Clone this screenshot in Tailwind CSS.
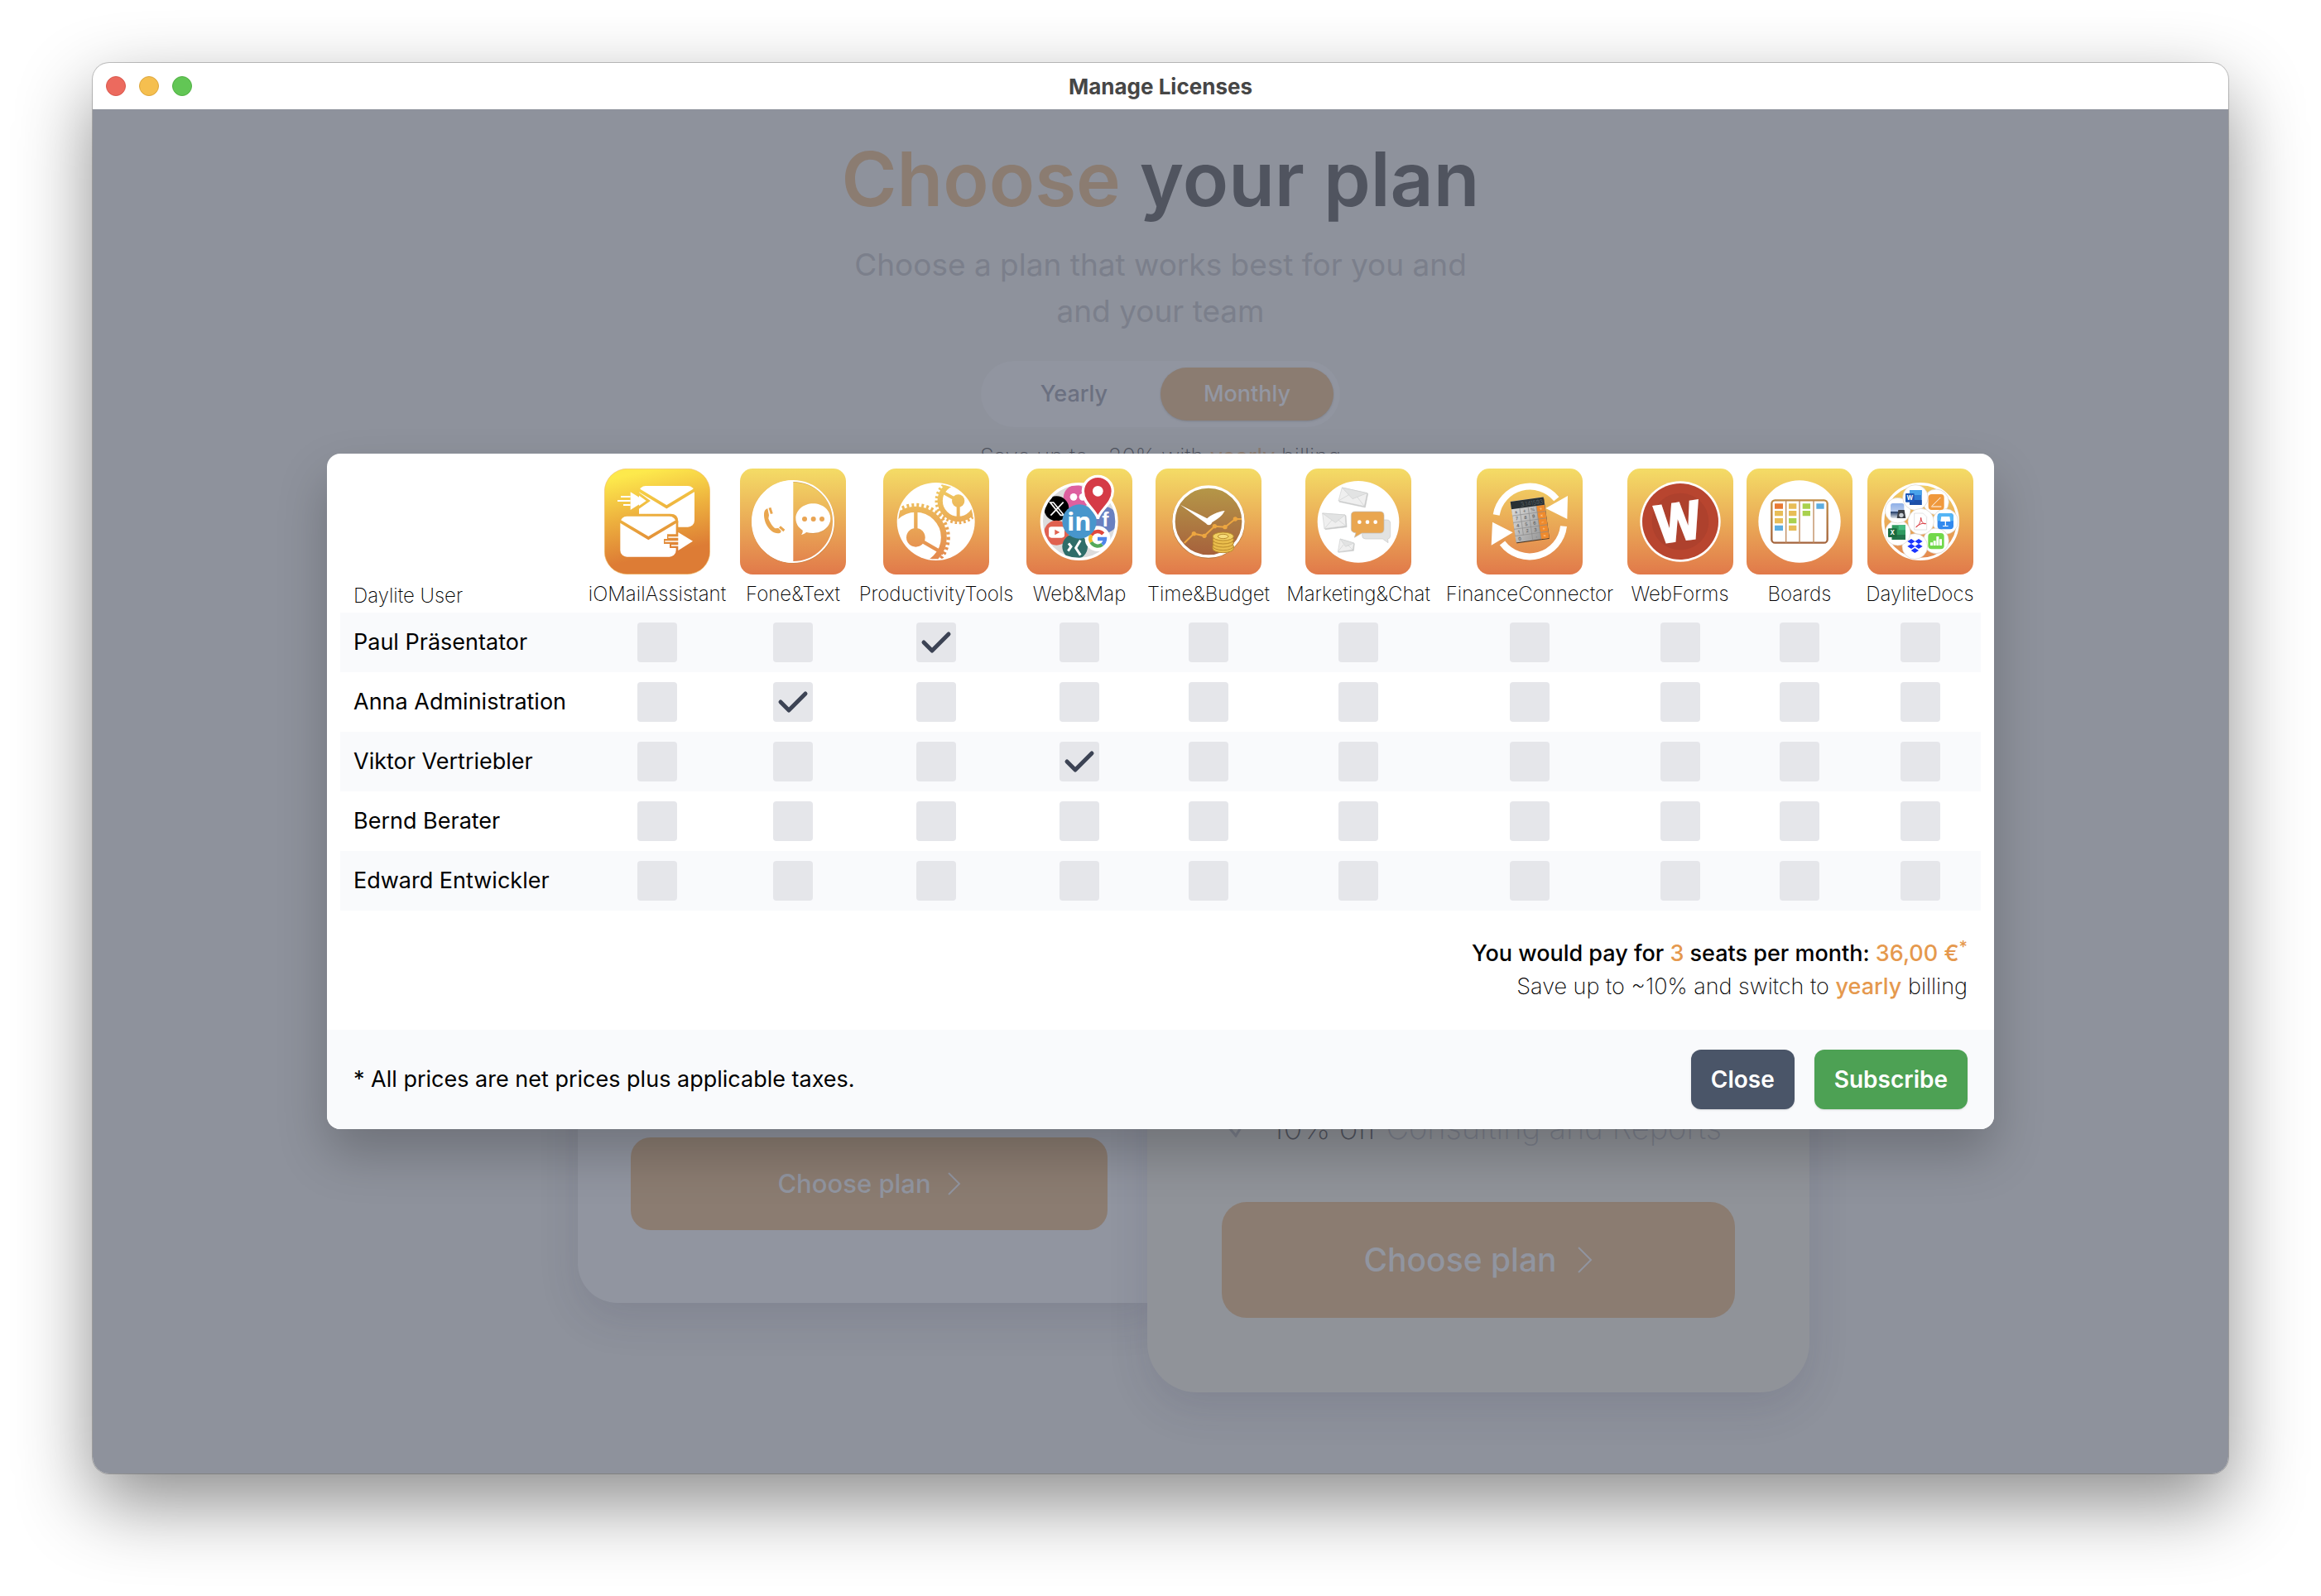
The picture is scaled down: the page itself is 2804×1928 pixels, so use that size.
<!DOCTYPE html>
<html lang="en">
  <head>
    <meta charset="UTF-8" />
    <meta name="viewport" content="width=device-width, initial-scale=1.0" />
    <title>Manage Licenses</title>
    <script src="https://cdn.jsdelivr.net/npm/@tailwindcss/browser@4"></script>
  </head>

  <body class="bg-white font-[Inter,sans-serif] text-[27px] text-black">
    <div class="min-h-screen flex flex-col px-28 pt-19 pb-37">
      <div class="flex-1 flex flex-col rounded-[20px] overflow-hidden bg-white shadow-[0_0_0_1px_rgba(0,0,0,0.22),0_36px_90px_rgba(0,0,0,0.45)]">
        <!-- Title bar -->
        <header class="grid grid-cols-3 items-center h-14 px-4">
          <div class="flex gap-4">
            <button type="button" aria-label="Close window" class="size-6 rounded-full bg-[#ec6a5e] border border-[#d8584d]"></button>
            <button type="button" aria-label="Minimize window" class="size-6 rounded-full bg-[#f5bf4f] border border-[#dba53c]"></button>
            <button type="button" aria-label="Zoom window" class="size-6 rounded-full bg-[#62c655] border border-[#50af43]"></button>
          </div>
          <h1 class="text-center text-[26px] font-bold text-[#464646]">Manage Licenses</h1>
        </header>

        <main class="relative flex-1 flex flex-col items-center bg-[#8e929c] overflow-hidden">
          <!-- Plan page, dimmed behind the dialog -->
          <h2 class="mt-8 text-[91px] leading-[104px] font-semibold text-[#50545f]"><span class="text-[#8b7c71]">Choose</span> your plan</h2>
          <p class="mt-6 text-[37px] leading-14 text-center text-[#7b7f8b]">Choose a plan that works best for you and<br />and your team</p>

          <div class="mt-8 flex rounded-full bg-[#9195a0] p-2 text-[27px] font-medium">
            <button type="button" class="h-16 w-[209px] rounded-full text-[#6b7080]">Yearly</button>
            <button type="button" class="h-16 w-[209px] rounded-full bg-[#8b7c71] text-[#9397a3] shadow-sm">Monthly</button>
          </div>
          <p class="mt-4 leading-10 font-extralight text-[#50545f]">Save up to ~20% with <a href="#" class="font-normal text-[#8b7c71]">yearly</a> billing</p>

          <div class="mt-19 pl-20 flex items-center">
            <section class="w-[704px] h-[818px] flex flex-col justify-end pl-16 pr-16 pb-22 rounded-l-[48px] bg-[#9195a0] shadow-[0_20px_50px_rgba(40,45,70,0.12)]">
              <button type="button" class="h-28 flex items-center justify-center gap-5 rounded-3xl bg-[#8b7c71] text-[31px] font-medium text-[#9195a0]">
                Choose plan
                <svg class="w-4 h-7" viewBox="0 0 16 28" fill="none" stroke="currentColor" stroke-width="2"><path d="M1 1l13 13L1 27" /></svg>
              </button>
            </section>
            <section class="relative -ml-4 w-[800px] h-[1034px] flex flex-col justify-end px-[90px] pb-[90px] rounded-[60px] bg-[#909399] shadow-[0_20px_50px_rgba(40,45,70,0.12)]">
              <p class="flex items-center gap-7 pl-1 mb-16 text-[38px] leading-13 font-extralight">
                <svg class="w-7 h-6" viewBox="0 0 28 24" fill="none" stroke="#7b7f8b" stroke-width="3"><path d="M3 10l10 12L26 1" /></svg>
                <span class="whitespace-nowrap text-[#7b7f8b]"><span class="text-[#50545f]">10% off</span> Consulting and Reports</span>
              </p>
              <button type="button" class="h-35 flex items-center justify-center gap-6 rounded-[30px] bg-[#8b7c71] text-[39px] font-medium text-[#9195a0]">
                Choose plan
                <svg class="w-5 h-8" viewBox="0 0 20 32" fill="none" stroke="currentColor" stroke-width="2"><path d="M2 1l15 15L2 31" /></svg>
              </button>
            </section>
          </div>

          <!-- License dialog -->
          <div class="absolute inset-0 flex items-center justify-center px-8">
            <form role="dialog" aria-label="Manage Licenses" class="w-full max-w-[2014px] rounded-2xl overflow-hidden bg-white shadow-[0_30px_60px_rgba(0,0,0,0.22)]">
              <div class="px-4 pb-8">
                <table class="w-full table-fixed">
                  <colgroup>
                    <col class="w-[292px]" />
                    <col class="w-[182px]" />
                    <col class="w-[146px]" />
                    <col class="w-[200px]" />
                    <col class="w-[146px]" />
                    <col class="w-[166px]" />
                    <col class="w-[196px]" />
                    <col class="w-[218px]" />
                    <col class="w-[145px]" />
                    <col class="w-[144px]" />
                    <col class="w-[147px]" />
                  </colgroup>
                  <thead class="text-[24px] leading-8">
                    <tr id="products">
                      <th scope="col" class="h-48 px-4 pb-1 align-bottom text-left font-extralight">Daylite User</th>
                    </tr>
                  </thead>
                  <tbody id="users"></tbody>
                </table>

                <div class="pt-8 px-4 text-right leading-10">
                  <p class="font-medium">You would pay for <span class="text-[#e5994e]">3</span> seats per month: <span class="text-[#e5994e]">36,00 €<sup class="text-[20px] leading-none">*</sup></span></p>
                  <p class="font-extralight">Save up to ~10% and switch to <a href="#" class="font-medium text-[#e5994e]">yearly</a> billing</p>
                </div>
              </div>

              <footer class="flex items-center gap-6 bg-[#f9fafc] px-8 py-6">
                <p class="flex-1">* All prices are net prices plus applicable taxes.</p>
                <button type="button" class="h-18 px-6 rounded-xl bg-[#4a5568] text-[28px] font-semibold text-white shadow-sm">Close</button>
                <button type="submit" class="h-18 px-6 rounded-xl bg-[#4da154] text-[28px] font-semibold text-white shadow-sm">Subscribe</button>
              </footer>
            </form>
          </div>
        </main>
      </div>
    </div>

    <!-- Shared gradients and product icons -->
    <svg class="absolute size-0" aria-hidden="true">
      <defs>
        <linearGradient id="tile" gradientUnits="userSpaceOnUse" x1="0" y1="0" x2="0" y2="384">
          <stop offset="0" stop-color="#f4dc66" />
          <stop offset="0.5" stop-color="#eaab57" />
          <stop offset="1" stop-color="#e1794a" />
        </linearGradient>
        <linearGradient id="mailTile" gradientUnits="userSpaceOnUse" x1="150" y1="10" x2="215" y2="310">
          <stop offset="0" stop-color="#fde94c" />
          <stop offset="0.5" stop-color="#edb03e" />
          <stop offset="1" stop-color="#dd7c35" />
        </linearGradient>
        <linearGradient id="clockFace" x1="0" y1="0" x2="0" y2="1">
          <stop offset="0" stop-color="#b59848" />
          <stop offset="1" stop-color="#a6603c" />
        </linearGradient>
        <linearGradient id="calcBody" x1="0" y1="0" x2="1" y2="1">
          <stop offset="0" stop-color="#e0e0e0" />
          <stop offset="1" stop-color="#8f8f8f" />
        </linearGradient>
        <linearGradient id="boardFrame" x1="0" y1="0" x2="0" y2="1">
          <stop offset="0" stop-color="#c08c45" />
          <stop offset="1" stop-color="#a4643c" />
        </linearGradient>
        <linearGradient id="sky" x1="0" y1="0" x2="0" y2="1">
          <stop offset="0" stop-color="#8fb0e8" />
          <stop offset="0.55" stop-color="#b8cbec" />
          <stop offset="0.56" stop-color="#1f3a66" />
          <stop offset="1" stop-color="#dfe4ea" />
        </linearGradient>
        <clipPath id="disc"><circle cx="191" cy="192" r="136" /></clipPath>

        <symbol id="icon-mail" viewBox="0 0 384 384">
          <rect x="1" y="1" width="382" height="382" rx="82" fill="url(#mailTile)" stroke="#f0bd6a" stroke-width="2" />
          <rect x="126" y="63" width="201" height="149" rx="24" fill="#fff" />
          <g fill="none" stroke="url(#mailTile)" stroke-width="11">
            <path d="M122 76l104 63 104-63" />
            <path d="M120 88l40 29-40 28" stroke-width="9" />
          </g>
          <path d="M95 85l52 32-52 33z" fill="#fff" />
          <path d="M60 102h35M48 117h47M69 132h26" stroke="#fff" stroke-width="6" />
          <path d="M50 330V190q0-26 30-26h160q28 0 28 28v138z" fill="url(#mailTile)" />
          <rect x="58" y="173" width="202" height="147" rx="24" fill="#fff" />
          <path d="M54 189l106 63 106-63" fill="none" stroke="url(#mailTile)" stroke-width="11" />
          <path d="M270 228l52 35-52 37zM228 247h42M216 264h54M237 279h33" fill="none" stroke="url(#mailTile)" stroke-width="18" />
          <path d="M268 231l53 32-53 34z" fill="#fff" />
          <path d="M232 249h38M220 264h50M243 279h27" stroke="#fff" stroke-width="5" />
        </symbol>

        <symbol id="icon-phone" viewBox="0 0 384 384">
          <rect width="384" height="384" rx="46" fill="url(#tile)" />
          <circle cx="193" cy="194" r="147" fill="none" stroke="#b9803c" stroke-opacity="0.5" stroke-width="6" />
          <circle cx="192" cy="192" r="147" fill="none" stroke="#fff" stroke-width="6" />
          <path d="M193 42a150 150 0 0 0 0 300z" fill="#fff" />
          <path d="M96 146c-14 6-10 38 0 58 12 22 30 34 48 30 4-2 6-5 4-9l-9-9-11 1c-10-6-19-20-25-36l2-12-5-24z" fill="#e9a64f" />
          <path d="M108 142l7 22M144 211l16 14" stroke="#e9a64f" stroke-width="9" />
          <ellipse cx="265" cy="182" rx="63" ry="54" fill="#b9803c" fill-opacity="0.4" />
          <path d="M265 127c35 0 63 24 63 54s-28 53-63 53c-9 0-17-1-25-3-4 4-10 8-18 9 4-5 6-10 5-16-16-10-25-25-25-43 0-30 28-54 63-54z" fill="#fff" />
          <g fill="#e9a453"><circle cx="234" cy="183" r="9" /><circle cx="266" cy="183" r="9" /><circle cx="297" cy="183" r="9" /></g>
        </symbol>

        <symbol id="icon-gears" viewBox="0 0 384 384">
          <rect width="384" height="384" rx="46" fill="url(#tile)" />
          <circle cx="191" cy="192" r="141" fill="#fff" />
          <g clip-path="url(#disc)">
            <g fill="none" stroke="url(#tile)">
              <circle cx="118" cy="250" r="102" stroke-width="21" />
              <circle cx="118" cy="250" r="118" stroke-width="13" stroke-dasharray="9 9" />
              <circle cx="272" cy="117" r="66" stroke-width="19" />
              <circle cx="272" cy="117" r="79" stroke-width="11" stroke-dasharray="8 8" />
              <path d="M118 155v70M118 250l100 58" stroke-width="13" />
              <path d="M272 117v62M272 117l-58-32" stroke-width="12" />
            </g>
            <circle cx="118" cy="250" r="34" fill="url(#tile)" />
            <circle cx="272" cy="117" r="23" fill="url(#tile)" />
          </g>
        </symbol>

        <symbol id="icon-web" viewBox="0 0 384 384">
          <rect width="384" height="384" rx="46" fill="url(#tile)" />
          <circle cx="191" cy="192" r="136" fill="#dcdcdc" />
          <g clip-path="url(#disc)">
            <circle cx="180" cy="106" r="46" fill="#dd609f" />
            <circle cx="171" cy="103" r="13" fill="#fff" />
            <circle cx="204" cy="103" r="13" fill="#fff" />
            <circle cx="109" cy="145" r="45" fill="#000" />
            <path d="M86 123h12l38 46h-12zM134 122l-46 48" fill="none" stroke="#fff" stroke-width="5" />
            <circle cx="109" cy="233" r="45" fill="#e06150" />
            <rect x="81" y="211" width="57" height="40" rx="10" fill="#fff" />
            <path d="M103 221l18 10-18 10z" fill="#e06150" />
            <circle cx="283" cy="186" r="48" fill="#6a80c0" />
            <text x="274" y="211" font-family="Liberation Sans" font-weight="700" font-size="74" fill="#fff">f</text>
            <circle cx="176" cy="283" r="46" fill="#2e6d69" />
            <path d="M153 271l9 12-11 16M196 260l-17 28 17 26" fill="none" stroke="#fff" stroke-width="9" />
            <circle cx="258" cy="254" r="46" fill="#fff" />
          </g>
          <circle cx="191" cy="192" r="136" fill="none" stroke="#fff" stroke-width="10" />
          <g fill="none" stroke-width="13">
            <path d="M278 237a27 27 0 0 0-43 4" stroke="#e0493e" />
            <path d="M235 241a27 27 0 0 0 0 26" stroke="#f5bd2f" />
            <path d="M235 267a27 27 0 0 0 40 8" stroke="#54a95b" />
            <path d="M275 275a27 27 0 0 0 10-20h-27" stroke="#4f86ea" />
          </g>
          <circle cx="192" cy="192" r="62" fill="#4896cc" />
          <text x="191" y="225" text-anchor="middle" font-family="Open Sans" font-weight="700" font-size="92" fill="#fff">in</text>
          <path d="M259 182c-6-32-54-54-54-100a54 54 0 0 1 108 0c0 46-48 68-54 100z" fill="#d53b46" stroke="#fff" stroke-width="10" />
          <circle cx="259" cy="82" r="19" fill="#fff" />
        </symbol>

        <symbol id="icon-time" viewBox="0 0 384 384">
          <rect width="384" height="384" rx="46" fill="url(#tile)" />
          <circle cx="192" cy="194" r="127" fill="none" stroke="#9a6a35" stroke-opacity="0.6" stroke-width="10" />
          <circle cx="192" cy="192" r="126" fill="url(#clockFace)" stroke="#fff" stroke-width="10" />
          <path d="M104 270l35-34 38 8 37-35 38 3 37-29h23" fill="none" stroke="#eda640" stroke-width="6" />
          <g fill="#eda640"><circle cx="139" cy="236" r="8" /><circle cx="177" cy="244" r="8" /><circle cx="214" cy="209" r="8" /><circle cx="252" cy="212" r="8" /><circle cx="289" cy="183" r="8" /></g>
          <path d="M89 131l98 50c14-12 34-24 64-28-10 20-26 30-46 42-2 10-16 14-22 4z" fill="#fff" />
          <g fill="#e9bd4c" stroke="#b98a2c" stroke-width="3">
            <path d="M207 282v8a38 15 0 0 0 76 0v-8z" />
            <ellipse cx="245" cy="281" rx="38" ry="15" />
            <ellipse cx="245" cy="270" rx="38" ry="15" />
            <ellipse cx="245" cy="258" rx="38" ry="15" />
            <ellipse cx="245" cy="246" rx="38" ry="15" fill="#f1d062" />
            <ellipse cx="245" cy="246" rx="19" ry="8" fill="#f6dc7c" />
          </g>
        </symbol>

        <symbol id="icon-chat" viewBox="0 0 384 384">
          <rect width="384" height="384" rx="46" fill="url(#tile)" />
          <circle cx="192" cy="193" r="148" fill="#fff" />
          <g stroke-width="2" stroke="#cfd0d0" stroke-linejoin="round">
            <path d="M137 71l90 20-10 50-94-20z" fill="#c4c4c4" />
            <path d="M133 69l91 20-10 48-94-20z" fill="#efefef" />
            <path d="M133 69l38 41 53-21z" fill="#e2e3e3" />
            <path d="M120 117l38-22M214 137l-26-34" fill="none" />
            <path d="M65 164l82 6 3 42-78 9z" fill="#c4c4c4" />
            <path d="M62 162l82 6 3 40-78 10z" fill="#efefef" />
            <path d="M62 162l47 34 35-28z" fill="#e2e3e3" />
            <path d="M69 218l28-32M147 208l-28-22" fill="none" />
            <path d="M128 257l50 15-3 26-55 6z" fill="#c4c4c4" />
            <path d="M126 255l50 15-4 25-54 7z" fill="#efefef" />
            <path d="M126 255l20 28 30-13z" fill="#e2e3e3" />
            <path d="M118 302l20-26M172 295l-18-18" fill="none" />
          </g>
          <path d="M218 186h77q13 0 13 13v44q0 11-9 12l1 14-20-14h-62q-12 0-12-12v-44q0-13 12-13z" fill="#e2e3e3" stroke="#c9caca" stroke-width="2" />
          <path d="M180 156h91q14 0 14 14v50q0 14-14 14h-66l-27 16 5-17q-17-1-17-14v-49q0-14 14-14z" fill="#e9a650" stroke="#c0c0c0" stroke-width="2" />
          <g fill="#fff"><circle cx="196" cy="194" r="7" /><circle cx="225" cy="194" r="7" /><circle cx="254" cy="194" r="7" /></g>
        </symbol>

        <symbol id="icon-finance" viewBox="0 0 384 384">
          <rect width="384" height="384" rx="46" fill="url(#tile)" />
          <path d="M71 168a124 124 0 0 1 218-58M315 209a124 124 0 0 1-222 61" fill="none" stroke="#fff" stroke-width="24" />
          <path d="M330 99l-2 84-78-39zM57 194l-4 84 78-46z" fill="#fff" />
          <g transform="translate(122 120) rotate(-8)">
            <rect x="1" y="3" width="121" height="150" rx="3" fill="#4a3320" />
            <rect width="121" height="150" rx="3" fill="url(#calcBody)" />
            <path d="M91 28h30v122H91z" fill="#ee8a2d" />
            <path d="M0 0h121v28H0z" fill="#293034" />
            <text x="117" y="23" text-anchor="end" font-family="Inter" font-size="21" fill="#7c8487">3.141593</text>
            <path d="M0 52h121M0 77h121M0 101h121M0 126h121M30 28v98M61 28v122M91 28v122" stroke="#8a8a8a" stroke-width="2" />
            <g font-family="Inter" font-weight="600" font-size="16" fill="#666" text-anchor="middle">
              <text x="15" y="70">7</text><text x="46" y="70">8</text><text x="76" y="70">9</text>
              <text x="15" y="95">4</text><text x="46" y="95">5</text><text x="76" y="95">6</text>
              <text x="15" y="119">1</text><text x="46" y="119">2</text><text x="76" y="119">3</text>
              <text x="15" y="144">0</text><text x="76" y="142">.</text>
              <text x="15" y="45">±</text><text x="46" y="45">÷</text><text x="76" y="45">%</text>
              <g fill="#ffc68b"><text x="106" y="45">÷</text><text x="106" y="70">×</text><text x="106" y="95">−</text><text x="106" y="119">+</text><text x="106" y="144">=</text></g>
            </g>
          </g>
        </symbol>

        <symbol id="icon-forms" viewBox="0 0 384 384">
          <rect width="384" height="384" rx="46" fill="url(#tile)" />
          <circle cx="192" cy="192" r="146" fill="#fff" />
          <circle cx="192" cy="192" r="138" fill="#b8452f" />
          <circle cx="192" cy="192" r="103" fill="#ae412d" />
          <text transform="translate(194 264) rotate(-8)" text-anchor="middle" font-family="Roboto" font-weight="900" font-size="200" fill="#fff">W</text>
        </symbol>

        <symbol id="icon-boards" viewBox="0 0 384 384">
          <rect width="384" height="384" rx="46" fill="url(#tile)" />
          <circle cx="192" cy="192" r="149" fill="#fff" />
          <rect x="91" y="115" width="202" height="154" rx="12" fill="#fff" stroke="url(#boardFrame)" stroke-width="7" />
          <path d="M143 115v154M192 115v154M243 115v154" stroke="#bf8a5c" stroke-width="4" />
          <path d="M102 127h30v19h-30z" fill="#e87a34" />
          <path d="M102 153h30v19h-30zM102 180h30v19h-30zM153 127h28v19h-28zM153 153h28v19h-28zM153 206h28v19h-28z" fill="#e8bd57" />
          <path d="M153 180h28v19h-28zM203 127h28v19h-28zM203 153h28v19h-28z" fill="#a9d14e" />
          <path d="M102 206h30v19h-30zM253 127h28v19h-28z" fill="#5dade0" />
        </symbol>

        <symbol id="icon-docs" viewBox="0 0 384 384">
          <rect width="384" height="384" rx="46" fill="url(#tile)" />
          <circle cx="192" cy="192" r="136" fill="none" stroke="#fff" stroke-width="10" />
          <g fill="#fff" stroke="#d9d2c8" stroke-width="2">
            <circle cx="249" cy="121" r="46" /><circle cx="283" cy="192" r="46" /><circle cx="249" cy="262" r="46" />
            <circle cx="172" cy="282" r="46" /><circle cx="110" cy="233" r="46" /><circle cx="110" cy="152" r="46" />
            <circle cx="174" cy="105" r="46" /><circle cx="194" cy="192" r="47" />
          </g>
          <path d="M153 78h44v54h-44z" fill="#2d7bd4" /><path d="M153 78h44v18h-44z" fill="#48a3ea" /><path d="M153 114h44v18h-44z" fill="#1d4fa8" />
          <rect x="138" y="90" width="32" height="32" rx="3" fill="#1d57b8" />
          <text x="154" y="114" text-anchor="middle" font-family="Inter" font-weight="700" font-size="22" fill="#fff">W</text>
          <rect x="221" y="93" width="57" height="57" rx="12" fill="#f0993c" />
          <path d="M234 136l31-31M232 138h36" stroke="#fff" stroke-width="3" />
          <rect x="254" y="162" width="58" height="58" rx="12" fill="#3389ee" />
          <path d="M254 190v-16q0-12 12-12h34q12 0 12 12v16z" fill="#55b5f5" />
          <path d="M268 174h30l3 18h-36zM281 192h4v16h-4zM273 207h20v3h-20z" fill="#fff" />
          <rect x="220" y="234" width="58" height="58" rx="12" fill="#72d84b" />
          <path d="M228 268h9v11h-9zM239 262h9v17h-9zM250 246h9v33h-9zM261 256h9v23h-9z" fill="#fff" />
          <path d="M159 255l14 9-14 9-14-9zM186 255l14 9-14 9-14-9zM159 273l14 9-14 9-14-9zM186 273l14 9-14 9-14-9zM172 288l14 9-14 9-14-9z" fill="#1a34ff" />
          <path d="M89 205h49v53H89z" fill="#2f9a60" /><path d="M113 205h25v18h-25z" fill="#45bd82" /><path d="M89 240h49v18H89z" fill="#22744a" />
          <rect x="75" y="217" width="32" height="32" rx="3" fill="#1b6a3e" />
          <text x="91" y="241" text-anchor="middle" font-family="Inter" font-weight="700" font-size="22" fill="#fff">X</text>
          <rect x="84" y="126" width="49" height="54" rx="8" fill="url(#sky)" />
          <path d="M112 150h22l5 30h-32z" fill="#3b3f45" /><circle cx="123" cy="169" r="8" fill="#c9ced4" />
          <path d="M170 162h32l13 13v47h-45z" fill="#fff" stroke="#d5d5d5" stroke-width="2" />
          <path d="M176 212c10-4 18-20 18-34 2 16 8 24 18 22-12-4-24 2-36 12z" fill="none" stroke="#d8343a" stroke-width="3" />
        </symbol>
      </defs>
    </svg>

    <script>
      const products = [
        { name: 'iOMailAssistant', icon: 'mail' },
        { name: 'Fone&amp;Text', icon: 'phone' },
        { name: 'ProductivityTools', icon: 'gears' },
        { name: 'Web&amp;Map', icon: 'web' },
        { name: 'Time&amp;Budget', icon: 'time' },
        { name: 'Marketing&amp;Chat', icon: 'chat' },
        { name: 'FinanceConnector', icon: 'finance' },
        { name: 'WebForms', icon: 'forms' },
        { name: 'Boards', icon: 'boards' },
        { name: 'DayliteDocs', icon: 'docs' },
      ];

      // seats: indexes of the products that are ticked for the user
      const users = [
        { name: 'Paul Präsentator', seats: [2] },
        { name: 'Anna Administration', seats: [1] },
        { name: 'Viktor Vertriebler', seats: [3] },
        { name: 'Bernd Berater', seats: [] },
        { name: 'Edward Entwickler', seats: [] },
      ];

      document.getElementById('products').insertAdjacentHTML('beforeend', products.map((product) => `
        <th scope="col" class="h-48 pb-[6px] align-bottom font-extralight">
          <div class="flex flex-col items-center gap-2">
            <svg class="size-32" aria-hidden="true"><use href="#icon-${product.icon}" /></svg>
            <span class="whitespace-nowrap">${product.name}</span>
          </div>
        </th>`).join(''));

      document.getElementById('users').innerHTML = users.map((user) => `
        <tr class="h-18 odd:bg-[#f9fafc]">
          <th scope="row" class="px-4 text-left font-normal whitespace-nowrap">${user.name}</th>
          ${products.map((product, i) => `
            <td>
              <label class="relative block size-12 mx-auto">
                <input type="checkbox" aria-label="${user.name}: ${product.name}" class="peer appearance-none block size-12 rounded bg-[#e5e6ea]" ${user.seats.includes(i) ? 'checked' : ''} />
                <svg class="absolute inset-0 size-12 hidden peer-checked:block" viewBox="0 0 48 48" fill="none" stroke="#3c4354" stroke-width="5" stroke-linecap="round" stroke-linejoin="round"><path d="M9 24l10 10 20-20" /></svg>
              </label>
            </td>`).join('')}
        </tr>`).join('');
    </script>
  </body>
</html>
